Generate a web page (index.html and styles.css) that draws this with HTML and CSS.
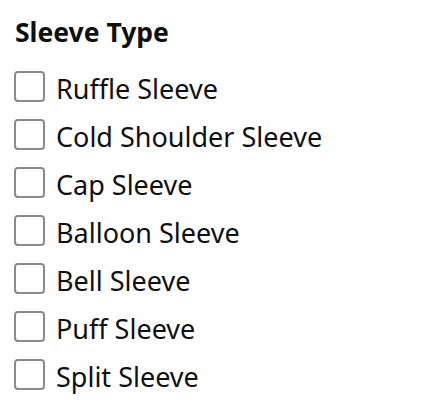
FILE: index.html
```html
<!DOCTYPE html>
<html lang="en">
  <head>
    <meta charset="UTF-8" />
    <title>Sleeve Type</title>
    <link rel="stylesheet" href="styles.css">
  </head>
  <body>
    <div class="filter">
      <h3 class="filter-title">Sleeve Type</h3>
      <ul class="filter-list">
        <li><label><span class="box"></span><span class="text">Ruffle Sleeve</span></label></li>
        <li><label><span class="box"></span><span class="text">Cold Shoulder Sleeve</span></label></li>
        <li><label><span class="box"></span><span class="text">Cap Sleeve</span></label></li>
        <li><label><span class="box"></span><span class="text">Balloon Sleeve</span></label></li>
        <li><label><span class="box"></span><span class="text">Bell Sleeve</span></label></li>
        <li><label><span class="box"></span><span class="text">Puff Sleeve</span></label></li>
        <li><label><span class="box"></span><span class="text">Split Sleeve</span></label></li>
      </ul>
    </div>
  </body>
</html>
```

FILE: styles.css
```css
body {
  margin: 0;
  background-color: #fff;
  font-family: "Noto Sans", Arial, sans-serif;
  color: #0f1111;
}

.filter {
  padding: 14px 0 0 14px;
}

.filter-title {
  margin: 0 0 21px 1px;
  font-size: 26.5px;
  line-height: 36px;
  font-weight: 700;
}

.filter-list {
  list-style: none;
  margin: 0;
  padding: 0;
}

.filter-list li {
  height: 48px;
}

.filter-list label {
  display: flex;
  align-items: center;
  gap: 11px;
  height: 31px;
  font-size: 27px;
  cursor: pointer;
}

.filter-list .text {
  padding-top: 3px;
  white-space: nowrap;
}

.box {
  flex: none;
  box-sizing: border-box;
  width: 31px;
  height: 31px;
  border: 2px solid #8a8a8a;
  border-radius: 4px;
  background-color: #fff;
}
```
